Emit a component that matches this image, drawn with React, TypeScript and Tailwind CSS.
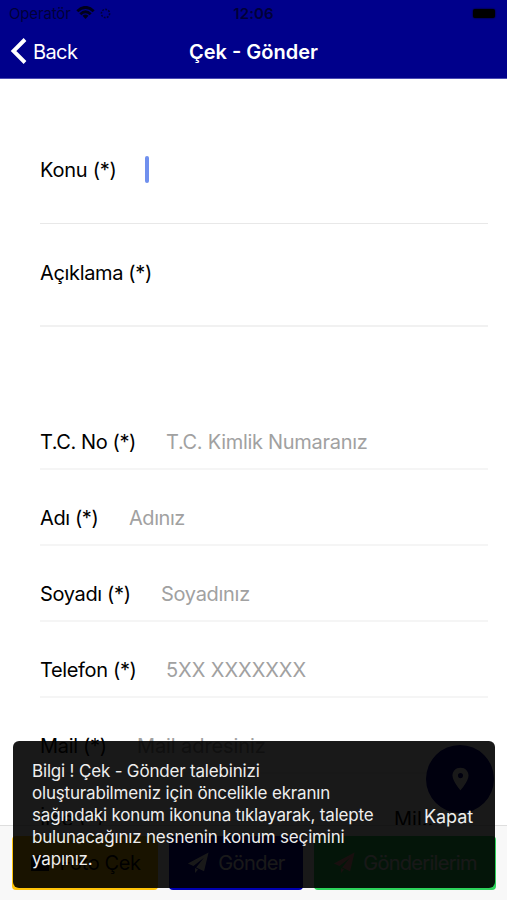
import React from "react";

type FieldProps = {
  label: string;
  placeholder: string;
  labelClass: string;
  hintClass: string;
};

function Field({ label, placeholder, labelClass, hintClass }: FieldProps) {
  return (
    <div className="flex h-[76px] items-center border-b-2 border-[#f5f5f5] pt-[22px] whitespace-nowrap">
      <span className={`shrink-0 text-black ${labelClass}`}>{label}</span>
      <span className={`text-[#a1a1a1] ${hintClass}`}>{placeholder}</span>
    </div>
  );
}

function Plane({ className }: { className: string }) {
  return (
    <svg viewBox="0 0 24 24" className={className} fill="currentColor">
      <path d="M23.500.5 1 12.500l6 2.800L18.500 6.200 10 16.800l8.600 4.200zM8.800 17.500V23l3.200-4z" />
    </svg>
  );
}

export default function App() {
  return (
    <div className="relative flex h-[900px] w-[507px] flex-col overflow-hidden bg-white font-['Inter','Liberation_Sans',sans-serif] text-[20px] leading-6">
      <header className="h-[79px] shrink-0 border-b border-[#4c4cb3] bg-[#00008b]">
        <div className="grid h-[27px] grid-cols-[1fr_auto_1fr] items-center text-[#000038]">
          <div className="flex items-center pl-[9px] text-[15px] leading-none">
            <span className="w-[67px] tracking-[-0.15px]">Operatör</span>
            <svg viewBox="0 0 18 13" className="-mt-[2px] h-[13px] w-[19px] text-[#00001c]" fill="none" stroke="currentColor" strokeWidth="2.9">
              <path d="M.8 5.200Q9-2.400 17.200 5.200M3.800 8.200Q9 3.400 14.200 8.200" />
              <path d="m6 9.800 3 3.200 3-3.200Q9 7.400 6 9.800Z" fill="currentColor" stroke="none" />
            </svg>
            <svg viewBox="0 0 12 12" className="ml-[5px] h-[11px] w-[11px]" fill="none" stroke="currentColor" strokeWidth="1.7" strokeDasharray="2 1.4">
              <circle cx="6" cy="6" r="4.5" />
            </svg>
          </div>
          <span className="text-[15px] font-semibold leading-none tracking-[0.1px]">12:06</span>
          <div className="flex justify-end pr-[12px]">
            <div className="h-[9px] w-[22px] rounded-[2px] bg-black shadow-[0_0_2px_#000]" />
          </div>
        </div>
        <div className="grid h-[50px] grid-cols-[1fr_auto_1fr] items-center text-white">
          <div className="flex items-center pl-[10px]">
            <svg viewBox="0 0 17 26" className="-mt-[2px] h-[26px] w-[17px]" fill="none" stroke="currentColor" strokeWidth="3.9">
              <path d="M15 1.5 3.500 13 15 24.500" />
            </svg>
            <span className="ml-[6px] text-[20px] tracking-[-0.6px]">Back</span>
          </div>
          <h1 className="text-[20px] font-semibold">Çek - Gönder</h1>
          <span />
        </div>
      </header>

      <main className="min-h-0 flex-1 overflow-hidden pl-[40px] pr-[19px]">
        <div className="flex h-[145px] items-center border-b border-[#e8e8e8] pt-[37px]">
          <span className="w-[105px] tracking-[-0.25px]">Konu (*)</span>
          <span className="h-[27px] w-[4px] rounded-sm bg-[#7090ee]" />
        </div>
        <div className="flex h-[103px] items-center border-b-2 border-[#f1f1f1] pb-[4px]">
          <span className="tracking-[-0.35px]">Açıklama (*)</span>
        </div>
        <div className="h-[67px]" />
        <Field label="T.C. No (*)" placeholder="T.C. Kimlik Numaranız" labelClass="w-[126px] tracking-[-0.4px]" hintClass="tracking-[-0.29px]" />
        <Field label="Adı (*)" placeholder="Adınız" labelClass="w-[89px] tracking-[-0.4px]" hintClass="tracking-[-0.45px]" />
        <Field label="Soyadı (*)" placeholder="Soyadınız" labelClass="w-[121px] tracking-[-0.35px]" hintClass="tracking-[-0.3px]" />
        <Field label="Telefon (*)" placeholder="5XX XXXXXXX" labelClass="w-[126px] tracking-[-0.35px]" hintClass="tracking-[-0.05px]" />
        <Field label="Mail (*)" placeholder="Mail adresiniz" labelClass="w-[97px] tracking-[-0.3px]" hintClass="tracking-[-0.1px]" />
        <div className="flex items-center pt-[33px] leading-[24px]">
          <span className="w-[354px]">İlçe (*)</span>
          <span>Mil..</span>
          <span className="ml-[14px] border-x-[5px] border-t-[6px] border-x-transparent border-t-[#555555]" />
        </div>
      </main>

      <footer className="flex h-[75px] shrink-0 gap-[11px] border-t border-[#dedede] bg-[#f8f8f8] pb-[10px] pl-[12px] pr-[11px] pt-[10px]">
        <button className="flex w-[146px] items-center justify-center gap-[8px] rounded-[4px] bg-[#ffc409] text-black">
          <svg viewBox="0 0 24 20" className="h-[18px] w-[22px]" fill="currentColor">
            <path d="M2 4h5l2-3h6l2 3h5v15H2z" />
          </svg>
          <span className="tracking-[-0.4px]">Foto Çek</span>
        </button>
        <button className="flex w-[134px] items-center justify-center gap-[9px] rounded-[4px] bg-[#0000b0] text-white">
          <Plane className="h-[22px] w-[22px]" />
          <span className="tracking-[-0.6px]">Gönder</span>
        </button>
        <button className="flex flex-1 items-center justify-center gap-[8px] rounded-[4px] bg-[#2dd35b] text-[#f4f4f4]">
          <Plane className="h-[22px] w-[22px] text-[#ff9c9c]" />
          <span className="tracking-[-0.7px]">Gönderilerim</span>
        </button>
      </footer>

      <div className="absolute left-[426px] top-[745px] flex size-[68px] items-center justify-center rounded-full bg-[#00008b] text-white">
        <svg viewBox="0 0 18 24" className="h-[24px] w-[17px]" fill="currentColor" fillRule="evenodd">
          <path d="M9 0C4 0 .5 3.600.5 8.200.5 14 9 24 9 24s8.500-10 8.500-15.800C17.500 3.600 14 0 9 0Zm0 5.700a2.700 2.700 0 1 1 0 5.400 2.700 2.700 0 0 1 0-5.400Z" />
        </svg>
      </div>

      <div className="absolute left-[13px] top-[741px] flex h-[147px] w-[482px] items-center justify-between rounded-[6px] bg-black/90 pl-[19px] pr-[22px] text-[#eeeeee]">
        <p className="whitespace-nowrap text-[17px] leading-[22px] tracking-[-0.18px]">
          Bilgi ! Çek - Gönder talebinizi<br />
          oluşturabilmeniz için öncelikle ekranın<br />
          sağındaki konum ikonuna tıklayarak, talepte<br />
          bulunacağınız nesnenin konum seçimini<br />
          yapınız.
        </p>
        <button className="pt-[4px] text-[18px] tracking-[-0.1px]">Kapat</button>
      </div>
    </div>
  );
}
